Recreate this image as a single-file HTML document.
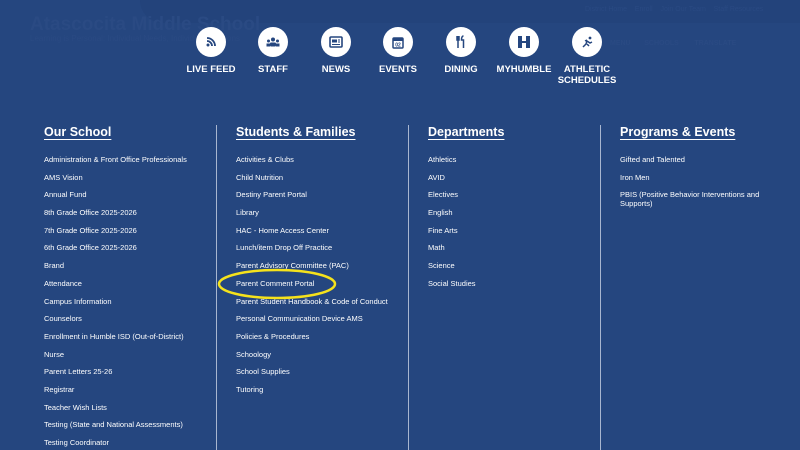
<!DOCTYPE html>
<html><head><meta charset="utf-8"><style>
html{overflow:hidden;height:450px}
body{margin:0;width:800px;height:450px;overflow:hidden;background:#25467f;font-family:"Liberation Sans",sans-serif;color:#fff;position:relative}
.bg1{position:absolute;left:140px;top:0;width:660px;height:23px;background:#23437b;border-bottom-left-radius:40px}
.ghost{position:absolute;color:#2a4a83;font-weight:bold}
.ic{position:absolute;top:27px;width:30px;height:30px;border-radius:50%;background:#fff;display:flex;align-items:center;justify-content:center}
.lb{position:absolute;top:64px;width:80px;text-align:center;font-size:9.5px;font-weight:bold;line-height:11px}
.col{position:absolute;top:125px}
.col h2{margin:0;font-size:12.5px;font-weight:bold;text-decoration:underline;text-underline-offset:3px;line-height:14px}
.col ul{list-style:none;margin:17px 0 0;padding:0}
.col li{font-size:7.5px;line-height:8.8px;padding:0;min-height:17.7px;width:200px}
.div{position:absolute;top:125px;width:1px;height:325px;background:#a8b6d0}
</style></head><body>
<div class="bg1"></div>
<div class="ghost" style="left:30px;top:14px;font-size:19px">Atascocita Middle School</div>
<div class="ghost" style="left:30px;top:34px;font-size:8px;font-weight:normal">Learning is Personal: Individual Needs, Individual Solutions</div>
<div class="ghost" style="left:585px;top:6px;font-size:7px;font-weight:normal">District Home &nbsp;&nbsp; Enroll &nbsp;&nbsp; Join Our Team &nbsp;&nbsp; Staff Resources</div>
<div class="ghost" style="left:610px;top:40px;font-size:7px">MENU &nbsp;&nbsp;&nbsp;&nbsp;&nbsp; SCHOOLS &nbsp;&nbsp;&nbsp;&nbsp;&nbsp;&nbsp; TRANSLATE</div>

<div class="ic" style="left:196px"><svg width="12" height="12" viewBox="0 0 12 12"><circle cx="3" cy="9" r="1.5" fill="#25467f"/><path d="M2 5a5 5 0 0 1 5 5M2 2a8 8 0 0 1 8 8" stroke="#25467f" stroke-width="1.8" fill="none"/></svg></div>
<div class="ic" style="left:258px"><svg width="14" height="10" viewBox="0 0 14 10"><circle cx="7" cy="2.5" r="2" fill="#25467f"/><circle cx="2.5" cy="4" r="1.5" fill="#25467f"/><circle cx="11.5" cy="4" r="1.5" fill="#25467f"/><rect x="4" y="5.5" width="6" height="4" rx="1" fill="#25467f"/><rect x="0.5" y="6.5" width="3.5" height="3" fill="#25467f"/><rect x="10" y="6.5" width="3.5" height="3" fill="#25467f"/></svg></div>
<div class="ic" style="left:321px"><svg width="14" height="12" viewBox="0 0 14 12"><rect x="1" y="1" width="12" height="10" rx="1" fill="none" stroke="#25467f" stroke-width="1.6"/><rect x="3" y="3.5" width="5" height="3" fill="#25467f"/><path d="M3 8.5h8M9 4h2M9 6h2" stroke="#25467f" stroke-width="1"/></svg></div>
<div class="ic" style="left:383px"><svg width="12" height="13" viewBox="0 0 12 13"><rect x="1" y="2" width="10" height="10" rx="1" fill="none" stroke="#25467f" stroke-width="1.5"/><rect x="1" y="2" width="10" height="3" fill="#25467f"/><text x="6" y="10.5" font-size="5" text-anchor="middle" fill="#25467f" font-family="Liberation Sans" font-weight="bold">02</text></svg></div>
<div class="ic" style="left:446px"><svg width="10" height="14" viewBox="0 0 10 14"><path d="M2 1v4M1 1v4h2V1M2 5v8M7.5 1c-1.5 0-2 2-2 4h2v8" stroke="#25467f" stroke-width="1.5" fill="none"/></svg></div>
<div class="ic" style="left:509px"><svg width="14" height="14" viewBox="0 0 14 14"><path d="M1 1h4v5h4V1h4v12H9V8H5v5H1z" fill="#25467f"/></svg></div>
<div class="ic" style="left:572px"><svg width="12" height="12" viewBox="0 0 12 12"><circle cx="9" cy="2" r="1.4" fill="#25467f"/><path d="M2 11l3-3 1-3 3 2 2-1M4 5l2-1M6 8l2 2" stroke="#25467f" stroke-width="1.5" fill="none"/></svg></div>
<div class="lb" style="left:171px">LIVE FEED</div>
<div class="lb" style="left:233px">STAFF</div>
<div class="lb" style="left:296px">NEWS</div>
<div class="lb" style="left:358px">EVENTS</div>
<div class="lb" style="left:421px">DINING</div>
<div class="lb" style="left:484px">MYHUMBLE</div>
<div class="lb" style="left:547px">ATHLETIC<br>SCHEDULES</div>

<div class="div" style="left:216px"></div><div class="div" style="left:408px"></div><div class="div" style="left:600px"></div>

<div class="col" style="left:44px"><h2>Our School</h2><ul>
<li>Administration &amp; Front Office Professionals</li><li>AMS Vision</li><li>Annual Fund</li><li>8th Grade Office 2025-2026</li><li>7th Grade Office 2025-2026</li><li>6th Grade Office 2025-2026</li><li>Brand</li><li>Attendance</li><li>Campus Information</li><li>Counselors</li><li>Enrollment in Humble ISD (Out-of-District)</li><li>Nurse</li><li>Parent Letters 25-26</li><li>Registrar</li><li>Teacher Wish Lists</li><li>Testing (State and National Assessments)</li><li>Testing Coordinator</li></ul></div>
<div class="col" style="left:236px"><h2>Students &amp; Families</h2><ul>
<li>Activities &amp; Clubs</li><li>Child Nutrition</li><li>Destiny Parent Portal</li><li>Library</li><li>HAC - Home Access Center</li><li>Lunch/item Drop Off Practice</li><li>Parent Advisory Committee (PAC)</li><li>Parent Comment Portal</li><li>Parent Student Handbook &amp; Code of Conduct</li><li>Personal Communication Device AMS</li><li>Policies &amp; Procedures</li><li>Schoology</li><li>School Supplies</li><li>Tutoring</li></ul></div>
<div class="col" style="left:428px"><h2>Departments</h2><ul>
<li>Athletics</li><li>AVID</li><li>Electives</li><li>English</li><li>Fine Arts</li><li>Math</li><li>Science</li><li>Social Studies</li></ul></div>
<div class="col" style="left:620px"><h2>Programs &amp; Events</h2><ul>
<li style="width:140px">Gifted and Talented</li><li style="width:140px">Iron Men</li><li style="width:140px">PBIS (Positive Behavior Interventions and Supports)</li></ul></div>

<svg style="position:absolute;left:0;top:0" width="800" height="450"><ellipse cx="277" cy="284" rx="58" ry="14" fill="none" stroke="#f5e21c" stroke-width="2.5"/></svg>
</body></html>
